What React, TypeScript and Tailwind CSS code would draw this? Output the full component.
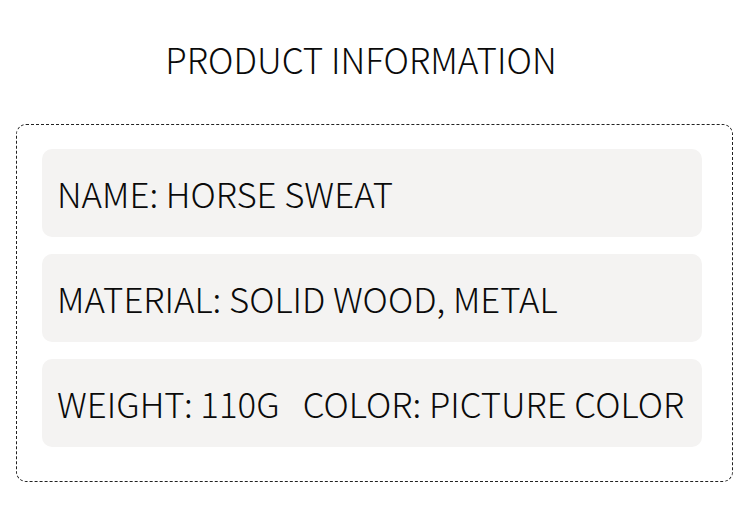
export default function App() {
  const rows = [
    'NAME: HORSE SWEAT',
    'MATERIAL: SOLID WOOD, METAL',
    'WEIGHT: 110G\u00a0\u00a0\u00a0COLOR: PICTURE COLOR',
  ];

  return (
    <div
      className="w-[750px] h-[505px] bg-white text-[#0a0a0a] overflow-hidden"
      style={{ fontFamily: '"Noto Sans CJK SC", "Noto Sans", sans-serif' }}
    >
      <h1 className="pt-[35px] pr-[28px] h-[124px] text-center text-[35px] font-light leading-[48px]">
        PRODUCT INFORMATION
      </h1>

      <div className="ml-[16px] w-[717px] h-[358px] border border-dashed border-[#222] rounded-[10px] pl-[25px] pt-[24px] flex flex-col gap-[17px]">
        {rows.map((text) => (
          <div
            key={text}
            className="w-[660px] h-[88px] bg-[#f4f3f2] rounded-[10px] flex items-center pl-[15px] pt-[1px]"
          >
            <span className="text-[34.8px] font-light leading-none">{text}</span>
          </div>
        ))}
      </div>
    </div>
  );
}
